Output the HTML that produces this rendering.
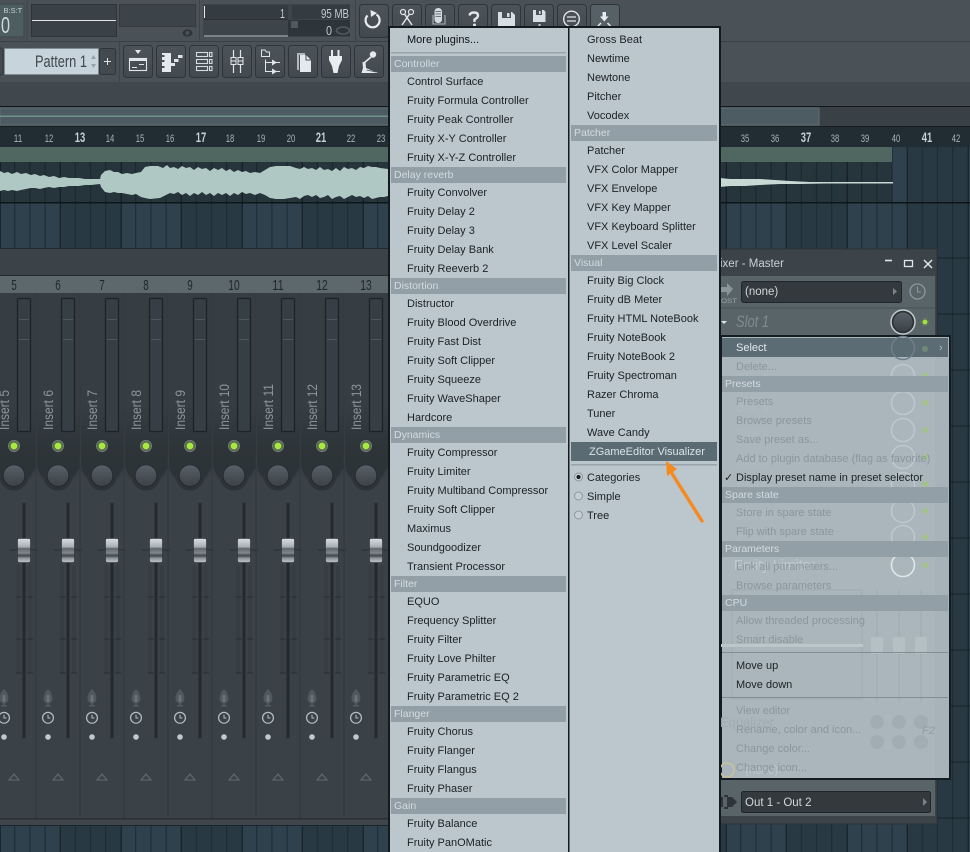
<!DOCTYPE html>
<html><head><meta charset="utf-8"><style>
html,body{margin:0;padding:0;background:#2d3e48}
#p{position:relative;width:970px;height:852px;overflow:hidden;font-family:"Liberation Sans",sans-serif}
svg{position:absolute;left:0;top:0}
.m,.h,.c,.d{position:absolute;white-space:nowrap;font-size:11px;line-height:19px;height:19px}
.m,.c,.d{margin-top:2px}
.m{color:#1b2226}
.h{color:#d3dbe0;background:#929fa6;height:16px;line-height:17px;font-size:10.5px;padding-left:3px;box-sizing:border-box}
.c{left:736px;color:#1b2226}
.d{left:736px;color:#8a969c}
.l{left:407px}.r{left:587px}
.hl{left:391px;width:175px}.hr{left:571px;width:146px}.hc{left:722px;width:226px}
</style></head><body><div id="p">
<svg width="970" height="852" viewBox="0 0 970 852" font-family="'Liberation Sans',sans-serif">
<defs>
<pattern id="g" x="-0.3" y="0" width="121" height="56" patternUnits="userSpaceOnUse">
<rect width="121" height="56" fill="#2f414c"/><rect x="60.5" width="60.5" height="56" fill="#293943"/>
<path d="M15 0V56M30.2 0V56M45.4 0V56M75.6 0V56M90.8 0V56M106 0V56" stroke="#1c2932"/>
<path d="M.5 0V56M60.5 0V56" stroke="#121b21"/></pattern>
<pattern id="g2" x="-0.3" y="0" width="121" height="56" patternUnits="userSpaceOnUse">
<rect width="121" height="56" fill="#26343c"/>
<path d="M15 0V56M30.2 0V56M45.4 0V56M75.6 0V56M90.8 0V56M106 0V56" stroke="#1a252b"/>
<path d="M.5 0V56M60.5 0V56" stroke="#10181d"/></pattern>
<linearGradient id="kn" x1="0" y1="0" x2="0" y2="1"><stop offset="0" stop-color="#596168"/><stop offset="1" stop-color="#3a4147"/></linearGradient>
<linearGradient id="dk" x1="0" y1="0" x2="0" y2="1"><stop offset="0" stop-color="#363e44"/><stop offset=".55" stop-color="#2e3539"/><stop offset="1" stop-color="#2c3337"/></linearGradient>
<linearGradient id="fd" x1="0" y1="0" x2="0" y2="1"><stop offset="0" stop-color="#d8dde0"/><stop offset=".35" stop-color="#a9b0b5"/><stop offset=".42" stop-color="#60686e"/><stop offset=".6" stop-color="#80888d"/><stop offset=".72" stop-color="#3f464c"/><stop offset=".82" stop-color="#8b9399"/><stop offset="1" stop-color="#c1c7cb"/></linearGradient>
<linearGradient id="btn" x1="0" y1="0" x2="0" y2="1"><stop offset="0" stop-color="#4c545a"/><stop offset="1" stop-color="#42494f"/></linearGradient>
<g id="st">
<path d="M-22 293V818" stroke="#30373c"/>
<path d="M-21 293H22V467Q22 478 14 480H-14Q-21 478 -21 467Z" fill="#363e44"/>
<path d="M-21 405H22V467Q18 474 14 478L-14 478Q-19 474 -21 467Z" fill="url(#dk)"/>
<rect x="3.5" y="298.500" width="13" height="133" rx="1" fill="#373f46" stroke="#1d2327" stroke-width="1.300"/>
<path d="M5 319.500H15M5 339.500H15" stroke="#4d565c"/>
<circle cx="0" cy="446" r="5.600" fill="#5b6a55" stroke="#77867a" stroke-width=".7"/><circle cx="0" cy="446" r="3.400" fill="#a6e83e"/>
<circle cx="0" cy="476" r="14.600" fill="#2d3438"/><circle cx="0" cy="476" r="11.400" fill="#24292d"/><circle cx="0" cy="475.600" r="10.400" fill="url(#kn)"/>
<path d="M4 565V673M16 565V673" stroke="#363e43" stroke-width="4" fill="none"/>
<path d="M2 597H8M13 597H19M2 639H8M13 639H19M2 673H8M13 673H19" stroke="#272d32" fill="none"/>
<rect x="8.500" y="503" width="3" height="235" fill="#23292d" stroke="#2f363b" stroke-width=".8"/>
<path d="M-4 550H24" stroke="#2a3034"/>
<rect x="3.500" y="538.500" width="13" height="24" rx="2" fill="url(#fd)" stroke="#2a3034" stroke-width=".6"/>
<path d="M-14.500 699Q-14.500 693 -10 689Q-5.500 693 -5.500 699Q-5.500 702 -9 703.500V705H-7V706.500H-13V705H-11V703.500Q-14.500 702 -14.500 699Z" fill="#4f595f"/>
<rect x="-11.500" y="695" width="3" height="7" rx="1" fill="#687278"/>
<circle cx="-10" cy="717.800" r="5.400" fill="none" stroke="#b7c1c6" stroke-width="1.200"/><path d="M-10 714.800V718H-7.600" fill="none" stroke="#b7c1c6" stroke-width="1"/>
<circle cx="-10" cy="737" r="2.800" fill="#c0cbd0"/>
<path d="M-5 780L0 774L5 780Z" fill="none" stroke="#626c71" stroke-width="1.100"/>
</g>
</defs>
<rect width="970" height="852" fill="#2d3e48"/>
<rect y="202" width="970" height="650" fill="url(#g)"/>
<rect y="146" width="970" height="60" fill="url(#g)"/>
<path d="M0 258H970M0 314H970M0 370H970M0 426H970M0 482H970M0 538H970M0 594H970M0 650H970M0 706H970M0 762H970M0 818H970" stroke="#18232a"/>
<!-- toolbar -->
<rect width="970" height="82" fill="#4a5258"/>
<rect y="41" width="970" height="1" fill="#3a4147"/>
<rect x="-1" y="4" width="25" height="33" fill="#4d5d60" stroke="#3c464a"/>
<text x="3.500" y="13" font-size="7.500" fill="#c6d0d2">B:S:T</text>
<text x="1" y="33" font-size="23" fill="#cfd8da" textLength="9" lengthAdjust="spacingAndGlyphs">0</text>
<path d="M27 0V41" stroke="#3d454a"/>
<rect x="31.500" y="4.500" width="85" height="32" fill="#3a4248" stroke="#2e353a"/><path d="M32 20.500H116" stroke="#dfe5e8"/>
<rect x="119.500" y="4.500" width="76" height="22" fill="#3c444a" stroke="#33393e"/>
<ellipse cx="187.500" cy="33" rx="5" ry="3.600" fill="#2e3539"/><circle cx="187.500" cy="33" r="2" fill="#4a5258"/>
<path d="M199.500 0V41" stroke="#3d454a"/>
<rect x="203" y="4" width="147" height="33" fill="#3d454b"/>
<rect x="204" y="5" width="84" height="14" fill="#343b41"/><rect x="292" y="5" width="58" height="14" fill="#343b41"/><rect x="288" y="20" width="62" height="16" fill="#2e353a"/>
<path d="M204.500 6V18" stroke="#dfe5e8"/><path d="M204 36H288" stroke="#b5bec3"/><path d="M204 19.500H288" stroke="#2b3136"/>
<text x="280" y="18" font-size="13" fill="#c2ccd0" textLength="5" lengthAdjust="spacingAndGlyphs">1</text>
<text x="321" y="18" font-size="13" fill="#c2ccd0" textLength="28" lengthAdjust="spacingAndGlyphs">95 MB</text>
<text x="326" y="35" font-size="13" fill="#c2ccd0" textLength="6" lengthAdjust="spacingAndGlyphs">0</text>
<rect x="291" y="21" width="7" height="7" fill="#4f585e"/><ellipse cx="343" cy="30.500" rx="6.500" ry="3.500" fill="none" stroke="#515a60" stroke-width="1.600"/>
<path d="M355.500 0V41" stroke="#3d454a"/>
<g fill="url(#btn)" stroke="#2f363b">
<rect x="359.500" y="4.500" width="29" height="33" rx="3"/><rect x="392.500" y="4.500" width="29" height="33" rx="3"/><rect x="425.500" y="4.500" width="29" height="33" rx="3"/><rect x="458.500" y="4.500" width="29" height="33" rx="3"/><rect x="491.500" y="4.500" width="29" height="33" rx="3"/><rect x="524.500" y="4.500" width="29" height="33" rx="3"/><rect x="557.500" y="4.500" width="29" height="33" rx="3"/><rect x="590.500" y="4.500" width="29" height="33" rx="3" fill="#566067"/>
<rect x="123.500" y="45.500" width="29" height="32" rx="3"/><rect x="156.500" y="45.500" width="29" height="32" rx="3"/><rect x="189.500" y="45.500" width="29" height="32" rx="3"/><rect x="222.500" y="45.500" width="29" height="32" rx="3"/><rect x="255.500" y="45.500" width="29" height="32" rx="3"/><rect x="288.500" y="45.500" width="29" height="32" rx="3"/><rect x="321.500" y="45.500" width="29" height="32" rx="3"/><rect x="354.500" y="45.500" width="29" height="32" rx="3"/>
</g>
<!-- row1 icons -->
<path d="M367.500 15.500A7 7 0 1 0 376.500 14.500" fill="none" stroke="#e6ecef" stroke-width="2.200"/><path d="M369.500 10L370 17L376 13Z" fill="#e6ecef" transform="translate(1,0)"/>
<circle cx="403" cy="12" r="2.500" fill="none" stroke="#dfe5e8" stroke-width="1.200"/><circle cx="411" cy="12" r="2.500" fill="none" stroke="#dfe5e8" stroke-width="1.200"/>
<path d="M404.500 14L412 25M409.500 14L402 25" stroke="#dfe5e8" stroke-width="1.500"/>
<rect x="434.500" y="8" width="7.500" height="15" rx="3.500" fill="#d4dbdf"/><path d="M435.500 11.500H441M435.500 14H441M435.500 16.500H441" stroke="#6d767c"/>
<path d="M433 15V24H445V15" fill="none" stroke="#aab3b8" stroke-width="1.100"/>
<path d="M469.500 15.500Q470 12.500 474 12.500Q478 12.500 478 15.500Q478 17.500 474.500 19.500V22" fill="none" stroke="#dfe5e8" stroke-width="2.400"/><circle cx="474.500" cy="25" r="1.500" fill="#dfe5e8"/>
<path d="M498 12H512L515 15V27H498Z" fill="#d8dfe3"/><rect x="502" y="12" width="9" height="6" fill="#4a5258"/><rect x="507" y="13" width="2.500" height="4" fill="#d8dfe3"/>
<path d="M533 10H544L545.500 12V22H533Z" fill="#d8dfe3"/><rect x="536" y="10" width="6" height="5" fill="#4a5258"/><rect x="539" y="11" width="1.600" height="3" fill="#d8dfe3"/><rect x="538.500" y="24" width="2" height="2.500" fill="#c5ccd0"/>
<circle cx="571.500" cy="19" r="7.800" fill="none" stroke="#dfe5e8" stroke-width="1.400"/><path d="M567 17H576M567 21H576" stroke="#dfe5e8" stroke-width="1.200"/>
<path d="M602.500 12H606V16.500H608.500L604.300 21.500L600 16.500H602.500Z" fill="#e6ecef"/><path d="M601 23L598 26M607.500 23L610.500 26" stroke="#e6ecef" stroke-width="1.500"/>
<!-- row2 -->
<path d="M135 50H141L138 54Z" fill="#e2e8eb"/><rect x="129.500" y="58.500" width="17" height="12" fill="none" stroke="#dfe5e8" stroke-width="1.100"/><rect x="129" y="58" width="18" height="3" fill="#dfe5e8"/><path d="M132 67.500H137M139 64.500H144" stroke="#dfe5e8" stroke-width="1.100"/>
<path d="M162 53H171V72H162V68H164.500V66H162V62H164.500V60H162V57H164.500V55H162Z" fill="#e3e9ec"/><rect x="178" y="55" width="4.500" height="3" fill="#dfe5e8"/><rect x="174" y="59" width="4.500" height="3" fill="#dfe5e8"/><rect x="171" y="63" width="4" height="3" fill="#dfe5e8"/>
<g fill="none" stroke="#d5dce0" stroke-width="1.100"><rect x="196.500" y="52.500" width="11" height="4"/><rect x="196.500" y="59.500" width="11" height="4"/><rect x="196.500" y="66.500" width="11" height="4"/><rect x="209.500" y="52.500" width="2.500" height="4"/><rect x="209.500" y="59.500" width="2.500" height="4"/><rect x="209.500" y="66.500" width="2.500" height="4"/></g>
<path d="M233.500 50V73M240.500 50V73" stroke="#dfe5e8" stroke-width="1.200"/><rect x="231" y="57.500" width="5" height="7" fill="#4a5258" stroke="#dfe5e8"/><rect x="238" y="57.500" width="5" height="7" fill="#4a5258" stroke="#dfe5e8"/><path d="M231 61H236M238 61H243" stroke="#dfe5e8"/>
<path d="M261.500 50H265L266.500 52H269.500V56.500H261.500Z" fill="none" stroke="#dfe5e8"/><path d="M265.500 59.500V71.500H280M265.500 62.500H280" stroke="#dfe5e8" fill="none"/><path d="M272 59.500V65.500L277 62.500ZM272 68.500V74.500L277 71.500Z" fill="#dfe5e8"/>
<path d="M297 53H305V55H299V70H297Z" fill="#aeb7bc"/><path d="M300 55H306L311 60V72H300Z" fill="#e3e9ec"/><path d="M306 55V60H311" fill="none" stroke="#4a5258"/>
<path d="M332 50V56M338.500 50V56" stroke="#e6ecef" stroke-width="2"/><path d="M329 56H342V60L339 66L337.500 73H333.500L332 66L329 60Z" fill="#e8eef0"/>
<circle cx="373" cy="54.500" r="3.200" fill="#e3e9ec"/><path d="M371 57L364 63" stroke="#e3e9ec" stroke-width="1.600"/><path d="M362.500 62H365.500L366 68L378 73H361.500L363 68Z" fill="#e3e9ec"/><path d="M366.500 70L376 72" stroke="#4a5258" stroke-width=".8"/>
<path d="M119.500 41V82" stroke="#3d454a"/>
<!-- pattern selector -->
<rect x="-8" y="48" width="11" height="27" rx="2" fill="#42494f" stroke="#2f363b"/>
<rect x="4.500" y="48.500" width="94" height="26" rx="1" fill="#c8d4db" stroke="#7f8c92"/>
<text x="35" y="67" font-size="17" fill="#3d474d" textLength="52" lengthAdjust="spacingAndGlyphs">Pattern 1</text>
<path d="M93.500 55L91 59H96ZM93.500 68L91 64H96Z" fill="#96a1a7"/>
<rect x="99.500" y="48.500" width="16" height="26" rx="2" fill="#42494f" stroke="#2f363b"/><path d="M104 61.500H111M107.500 58V65" stroke="#dfe5e8"/>
<!-- playlist bands -->
<rect y="82" width="970" height="24" fill="#40484e"/>
<rect y="106" width="970" height="1" fill="#14191c"/>
<rect y="107" width="970" height="19" fill="#394147"/>
<rect y="108" width="819" height="17" fill="#4d5c63" stroke="#5e6d74"/>
<rect y="115.500" width="388" height="1.500" fill="#6f918b"/>
<rect y="126" width="970" height="1" fill="#191f23"/>
<rect y="127" width="970" height="20" fill="#212c33"/>
<g fill="#a8b3b8" font-size="11" text-anchor="middle">
<text x="18" y="142" textLength="8.500" lengthAdjust="spacingAndGlyphs">11</text><text x="49" y="142" textLength="8.500" lengthAdjust="spacingAndGlyphs">12</text><text x="110" y="142" textLength="8.500" lengthAdjust="spacingAndGlyphs">14</text><text x="140" y="142" textLength="8.500" lengthAdjust="spacingAndGlyphs">15</text><text x="170" y="142" textLength="8.500" lengthAdjust="spacingAndGlyphs">16</text><text x="230" y="142" textLength="8.500" lengthAdjust="spacingAndGlyphs">18</text><text x="261" y="142" textLength="8.500" lengthAdjust="spacingAndGlyphs">19</text><text x="291" y="142" textLength="8.500" lengthAdjust="spacingAndGlyphs">20</text><text x="351" y="142" textLength="8.500" lengthAdjust="spacingAndGlyphs">22</text><text x="381" y="142" textLength="8.500" lengthAdjust="spacingAndGlyphs">23</text>
<text x="745" y="142" textLength="8.500" lengthAdjust="spacingAndGlyphs">35</text><text x="775" y="142" textLength="8.500" lengthAdjust="spacingAndGlyphs">36</text><text x="835" y="142" textLength="8.500" lengthAdjust="spacingAndGlyphs">38</text><text x="865" y="142" textLength="8.500" lengthAdjust="spacingAndGlyphs">39</text><text x="896" y="142" textLength="8.500" lengthAdjust="spacingAndGlyphs">40</text><text x="956" y="142" textLength="8.500" lengthAdjust="spacingAndGlyphs">42</text></g>
<g fill="#c5d0d4" font-size="13.500" font-weight="bold" text-anchor="middle">
<text x="80" y="142" textLength="10.500" lengthAdjust="spacingAndGlyphs">13</text><text x="201" y="142" textLength="10.500" lengthAdjust="spacingAndGlyphs">17</text><text x="321" y="142" textLength="10.500" lengthAdjust="spacingAndGlyphs">21</text><text x="806" y="142" textLength="10.500" lengthAdjust="spacingAndGlyphs">37</text><text x="927" y="142" textLength="10.500" lengthAdjust="spacingAndGlyphs">41</text></g>
<rect y="147" width="892" height="15" fill="#4f6661"/>
<rect y="162" width="892" height="40" fill="url(#g2)"/>
<rect y="202" width="970" height="1.500" fill="#0e1519"/>
<path d="M0 171L4 173L8 172L12 174L17 172L21 174L26 173L31 175L35 174L40 176L44 175L49 177L54 176L59 178L64 177L69 178L74 178L79 178L85 179L91 179L100 179L101 175L105 171L110 170L114 172L118 172L122 174L127 173L132 174L136 173L141 172L145 167L150 166L158 166L163 168L167 165L170 168L174 167L178 169L182 166L186 168L190 167L194 170L198 167L202 169L206 168L210 171L214 168L218 170L222 168L226 171L230 169L234 172L238 170L242 172L246 171L250 173L255 172L260 173L265 170L270 167L276 166L284 166L290 166L296 168L300 169L304 167L308 169L312 168L316 170L320 167L324 170L328 169L332 171L336 168L340 171L344 167L348 169L352 168L356 170L360 167L364 168L368 166L372 167L376 167L380 168L388 169L388 196L384 197L380 197L376 198L372 199L368 196L364 198L360 196L356 197L352 195L348 197L344 199L340 196L336 197L332 199L328 195L324 197L320 198L316 195L312 197L308 195L304 196L300 199L296 197L290 198L284 199L276 199L270 198L265 195L260 193L255 195L250 193L246 194L242 192L238 195L234 193L230 196L226 193L222 195L218 193L214 196L210 193L206 195L202 192L198 195L194 193L190 196L186 193L182 195L178 192L174 194L170 193L166 195L160 198L150 199L145 198L141 197L136 194L132 195L127 194L122 193L118 193L114 192L110 193L105 192L101 187L100 184L91 185L85 185L79 186L74 186L69 186L64 187L59 187L54 188L49 187L44 188L40 189L35 188L31 188L26 189L21 190L17 191L12 190L8 191L4 190L0 191Z" fill="#b0c8c4"/>
<path d="M720 178L730 179L745 179L760 179L775 180L790 181L810 182L825 182L893 182L893 183.500L825 183.500L800 184L780 184L760 185L745 186L730 186L720 187Z" fill="#c8d8d4"/>
<!-- mixer left -->
<rect x="0" y="248" width="388" height="577" fill="#3a4247"/>
<rect y="248" width="388" height="1" fill="#242b30"/>
<rect y="249" width="388" height="27" fill="#3b4349"/>
<rect y="275" width="388" height="1" fill="#252b2f"/>
<rect y="276" width="388" height="17" fill="#5d686c"/>
<rect y="818" width="388" height="1.500" fill="#2a3034"/><rect y="819.500" width="388" height="5.500" fill="#3e464c"/>
<rect y="825" width="388" height="1" fill="#1b2429"/>
<use href="#st" x="14"/><use href="#st" x="58"/><use href="#st" x="102"/><use href="#st" x="146"/><use href="#st" x="190"/><use href="#st" x="234"/><use href="#st" x="278"/><use href="#st" x="322"/><use href="#st" x="366"/>
<g fill="#20282c" font-size="15" text-anchor="middle">
<text x="14" y="290" textLength="5.500" lengthAdjust="spacingAndGlyphs">5</text><text x="58" y="290" textLength="5.500" lengthAdjust="spacingAndGlyphs">6</text><text x="102" y="290" textLength="5.500" lengthAdjust="spacingAndGlyphs">7</text><text x="146" y="290" textLength="5.500" lengthAdjust="spacingAndGlyphs">8</text><text x="190" y="290" textLength="5.500" lengthAdjust="spacingAndGlyphs">9</text><text x="234" y="290" textLength="11.500" lengthAdjust="spacingAndGlyphs">10</text><text x="278" y="290" textLength="11.500" lengthAdjust="spacingAndGlyphs">11</text><text x="322" y="290" textLength="11.500" lengthAdjust="spacingAndGlyphs">12</text><text x="366" y="290" textLength="11.500" lengthAdjust="spacingAndGlyphs">13</text></g>
<g fill="#8a969b" font-size="14">
<text transform="translate(9,430) rotate(-90)" textLength="40" lengthAdjust="spacingAndGlyphs">Insert 5</text><text transform="translate(53,430) rotate(-90)" textLength="40" lengthAdjust="spacingAndGlyphs">Insert 6</text><text transform="translate(97,430) rotate(-90)" textLength="40" lengthAdjust="spacingAndGlyphs">Insert 7</text><text transform="translate(141,430) rotate(-90)" textLength="40" lengthAdjust="spacingAndGlyphs">Insert 8</text><text transform="translate(185,430) rotate(-90)" textLength="40" lengthAdjust="spacingAndGlyphs">Insert 9</text><text transform="translate(229,430) rotate(-90)" textLength="46" lengthAdjust="spacingAndGlyphs">Insert 10</text><text transform="translate(273,430) rotate(-90)" textLength="46" lengthAdjust="spacingAndGlyphs">Insert 11</text><text transform="translate(317,430) rotate(-90)" textLength="46" lengthAdjust="spacingAndGlyphs">Insert 12</text><text transform="translate(361,430) rotate(-90)" textLength="46" lengthAdjust="spacingAndGlyphs">Insert 13</text></g>
<!-- mixer master -->
<rect x="720" y="249" width="217" height="575" fill="#3c444a" stroke="#2c3338"/>
<text x="720" y="267" font-size="11.500" fill="#c8d1d5">ixer - Master</text>
<path d="M885 260.500H892" stroke="#dfe5e8" stroke-width="1.600"/><rect x="904.500" y="260.500" width="8" height="6" fill="none" stroke="#dfe5e8" stroke-width="1.300"/><path d="M924 260L932 268M932 260L924 268" stroke="#dfe5e8" stroke-width="1.500"/>
<rect x="721" y="276" width="214" height="59" fill="#596469"/>
<path d="M721 287H727V283L733 289L727 296V292H721Z" fill="#8a959a"/>
<text x="721" y="303" font-size="6.500" fill="#9aa5aa" textLength="16" lengthAdjust="spacingAndGlyphs">OST</text>
<rect x="741.500" y="281.500" width="160" height="21" rx="2" fill="#33393d" stroke="#20262a"/>
<text x="745" y="295" font-size="11.500" fill="#d0d8dc">(none)</text><path d="M893 288L897 291.500L893 295Z" fill="#78848a"/>
<circle cx="917.500" cy="291.500" r="7.500" fill="none" stroke="#8d999e" stroke-width="1.300"/><path d="M917.500 286.500V292H921" fill="none" stroke="#8d999e"/>
<path d="M721 308H935" stroke="#485257"/>
<path d="M721 321H727L724 324Z" fill="#dfe5e8"/>
<text x="736" y="327" font-size="17" font-style="italic" fill="#7f8b90" textLength="33" lengthAdjust="spacingAndGlyphs">Slot 1</text>
<circle cx="903" cy="322" r="12" fill="#2d3337" stroke="#c0cbcf" stroke-width="1.500"/><circle cx="903" cy="322" r="9.500" fill="url(#kn)"/>
<circle cx="925" cy="322" r="4" fill="#51604f" stroke="#7c8a7e" stroke-width=".5"/><circle cx="925" cy="322" r="2.600" fill="#9fdf45"/>
<!-- lower master -->
<rect x="721" y="780" width="214" height="36" fill="#596469"/>
<rect x="741.500" y="791.500" width="189" height="21" rx="2" fill="#33393d" stroke="#20262a"/>
<text x="745" y="806" font-size="11.500" fill="#d0d8dc">Out 1 - Out 2</text><path d="M923 798L927 802L923 806Z" fill="#78848a"/>
<path d="M724 796H728M724 808H728M722 797V807" fill="none" stroke="#2e3438" stroke-width="2"/><path d="M727 797H732L737 802L732 807H727Z" fill="#2e3438"/>
<!-- context menu -->
<rect x="721" y="336" width="229" height="443" fill="#aab6bc" stroke="#161d22" stroke-width="2"/>
<rect x="935" y="337" width="14" height="441" fill="#a7b3b9"/>
<rect x="722" y="338" width="226" height="19" fill="#5c6c75"/>
<g fill="none" stroke="#bcc8cd" stroke-width="1.600">
<circle cx="903" cy="376" r="11.500"/><circle cx="903" cy="403" r="11.500"/><circle cx="903" cy="430" r="11.500"/><circle cx="903" cy="457" r="11.500"/><circle cx="903" cy="484" r="11.500"/><circle cx="903" cy="511" r="11.500"/><circle cx="903" cy="537" r="11.500"/></g>
<circle cx="903" cy="565" r="11.500" fill="none" stroke="#dfe6e9" stroke-width="1.600"/>
<circle cx="903" cy="348" r="11.500" fill="none" stroke="#6f7f87" stroke-width="1.500"/>
<g fill="#a3c28a"><circle cx="925" cy="375.500" r="3"/><circle cx="925" cy="403" r="3"/><circle cx="925" cy="430" r="3"/><circle cx="925" cy="457" r="3"/><circle cx="925" cy="484" r="3"/><circle cx="925" cy="511" r="3"/><circle cx="925" cy="537" r="3"/><circle cx="925" cy="565" r="3"/></g>
<circle cx="925" cy="349" r="3" fill="#6f8a72"/>
<g fill="#b9c4c9" font-size="17" font-style="italic" opacity=".3">
<text x="736" y="386" textLength="33" lengthAdjust="spacingAndGlyphs">Slot 3</text><text x="736" y="412" textLength="33" lengthAdjust="spacingAndGlyphs">Slot 4</text><text x="736" y="440" textLength="33" lengthAdjust="spacingAndGlyphs">Slot 5</text><text x="736" y="467" textLength="33" lengthAdjust="spacingAndGlyphs">Slot 6</text><text x="736" y="494" textLength="33" lengthAdjust="spacingAndGlyphs">Slot 7</text><text x="736" y="520" textLength="33" lengthAdjust="spacingAndGlyphs">Slot 8</text><text x="736" y="547" textLength="33" lengthAdjust="spacingAndGlyphs">Slot 9</text></g>
<text x="734" y="570" font-size="15" fill="#c5d0d4" opacity=".8" textLength="81" lengthAdjust="spacingAndGlyphs">Fruity Limiter</text>
<g fill="none" stroke="#9eabb1">
<path d="M877 590V702M899 590V702M921 590V702"/><rect x="732" y="590" width="130" height="109"/></g>
<rect x="721" y="644" width="142" height="3" fill="#bcc7cc"/>
<g fill="#b5c0c5"><rect x="871" y="637" width="12" height="17" rx="2"/><rect x="893" y="637" width="12" height="17" rx="2"/><rect x="915" y="637" width="12" height="17" rx="2"/></g>
<text x="720" y="727" font-size="14" fill="#a0acb2" textLength="54" lengthAdjust="spacingAndGlyphs">Equalizer</text>
<g fill="#a1adb3"><circle cx="877" cy="722" r="7"/><circle cx="899" cy="722" r="7"/><circle cx="921" cy="722" r="7"/><circle cx="877" cy="742" r="7"/><circle cx="899" cy="742" r="7"/><circle cx="921" cy="742" r="7"/></g>
<text x="922" y="734" font-size="11" font-style="italic" fill="#8f9ba1">F2</text>
<circle cx="727" cy="770" r="7" fill="none" stroke="#c8c29a" stroke-width="1.600"/>
<text x="745" y="774" font-size="11.500" fill="#bcc7cc">(none)</text>
<path d="M722 652.500H948M722 697.500H948" stroke="#818e95"/>
<!-- main menu -->
<rect x="389" y="27" width="331" height="830" fill="#bcc6cd" stroke="#141b20" stroke-width="2"/>
<rect x="568" y="27" width="1.500" height="830" fill="#141b20"/>
<rect x="391" y="52" width="175" height="1.500" fill="#98a4ab"/>
<rect x="571" y="442" width="146" height="19" fill="#5b6b74"/>
<rect x="571" y="464" width="146" height="1.500" fill="#98a4ab"/>
<g fill="#c4ced4" stroke="#8d999f"><circle cx="578.500" cy="477" r="4"/><circle cx="578.500" cy="496" r="4"/><circle cx="578.500" cy="515" r="4"/></g><circle cx="578.500" cy="477" r="2" fill="#161c20"/>
</svg>

<div class="m l" style="top:29px;color:#0e1418">More plugins...</div>
<div class="h hl" style="top:56px">Controller</div>
<div class="m l" style="top:71px">Control Surface</div>
<div class="m l" style="top:90px">Fruity Formula Controller</div>
<div class="m l" style="top:109px">Fruity Peak Controller</div>
<div class="m l" style="top:128px">Fruity X-Y Controller</div>
<div class="m l" style="top:147px">Fruity X-Y-Z Controller</div>
<div class="h hl" style="top:167px">Delay reverb</div>
<div class="m l" style="top:182px">Fruity Convolver</div>
<div class="m l" style="top:201px">Fruity Delay 2</div>
<div class="m l" style="top:220px">Fruity Delay 3</div>
<div class="m l" style="top:239px">Fruity Delay Bank</div>
<div class="m l" style="top:258px">Fruity Reeverb 2</div>
<div class="h hl" style="top:278px">Distortion</div>
<div class="m l" style="top:293px">Distructor</div>
<div class="m l" style="top:312px">Fruity Blood Overdrive</div>
<div class="m l" style="top:331px">Fruity Fast Dist</div>
<div class="m l" style="top:350px">Fruity Soft Clipper</div>
<div class="m l" style="top:369px">Fruity Squeeze</div>
<div class="m l" style="top:388px">Fruity WaveShaper</div>
<div class="m l" style="top:407px">Hardcore</div>
<div class="h hl" style="top:427px">Dynamics</div>
<div class="m l" style="top:442px">Fruity Compressor</div>
<div class="m l" style="top:461px">Fruity Limiter</div>
<div class="m l" style="top:480px">Fruity Multiband Compressor</div>
<div class="m l" style="top:499px">Fruity Soft Clipper</div>
<div class="m l" style="top:518px">Maximus</div>
<div class="m l" style="top:537px">Soundgoodizer</div>
<div class="m l" style="top:556px">Transient Processor</div>
<div class="h hl" style="top:576px">Filter</div>
<div class="m l" style="top:591px">EQUO</div>
<div class="m l" style="top:610px">Frequency Splitter</div>
<div class="m l" style="top:629px">Fruity Filter</div>
<div class="m l" style="top:648px">Fruity Love Philter</div>
<div class="m l" style="top:667px">Fruity Parametric EQ</div>
<div class="m l" style="top:686px">Fruity Parametric EQ 2</div>
<div class="h hl" style="top:706px">Flanger</div>
<div class="m l" style="top:721px">Fruity Chorus</div>
<div class="m l" style="top:740px">Fruity Flanger</div>
<div class="m l" style="top:759px">Fruity Flangus</div>
<div class="m l" style="top:778px">Fruity Phaser</div>
<div class="h hl" style="top:798px">Gain</div>
<div class="m l" style="top:813px">Fruity Balance</div>
<div class="m l" style="top:832px">Fruity PanOMatic</div>

<div class="m r" style="top:29px">Gross Beat</div>
<div class="m r" style="top:48px">Newtime</div>
<div class="m r" style="top:67px">Newtone</div>
<div class="m r" style="top:86px">Pitcher</div>
<div class="m r" style="top:105px">Vocodex</div>
<div class="h hr" style="top:125px">Patcher</div>
<div class="m r" style="top:140px">Patcher</div>
<div class="m r" style="top:159px">VFX Color Mapper</div>
<div class="m r" style="top:178px">VFX Envelope</div>
<div class="m r" style="top:197px">VFX Key Mapper</div>
<div class="m r" style="top:216px">VFX Keyboard Splitter</div>
<div class="m r" style="top:235px">VFX Level Scaler</div>
<div class="h hr" style="top:255px">Visual</div>
<div class="m r" style="top:270px">Fruity Big Clock</div>
<div class="m r" style="top:289px">Fruity dB Meter</div>
<div class="m r" style="top:308px">Fruity HTML NoteBook</div>
<div class="m r" style="top:327px">Fruity NoteBook</div>
<div class="m r" style="top:346px">Fruity NoteBook 2</div>
<div class="m r" style="top:365px">Fruity Spectroman</div>
<div class="m r" style="top:384px">Razer Chroma</div>
<div class="m r" style="top:403px">Tuner</div>
<div class="m r" style="top:422px">Wave Candy</div>
<div class="m" style="left:589px;top:441px;color:#dbe3e7">ZGameEditor Visualizer</div>
<div class="m r" style="top:467px">Categories</div>
<div class="m r" style="top:486px">Simple</div>
<div class="m r" style="top:505px">Tree</div>

<div class="c" style="top:337px;color:#e3e9ec">Select</div>
<div class="m" style="left:939px;top:337px;color:#aeb9bf">›</div>
<div class="d" style="top:356px">Delete...</div>
<div class="h hc" style="top:376px">Presets</div>
<div class="d" style="top:391px">Presets</div>
<div class="d" style="top:410px">Browse presets</div>
<div class="d" style="top:429px">Save preset as...</div>
<div class="d" style="top:448px">Add to plugin database (flag as favorite)</div>
<div class="c" style="top:467px">Display preset name in preset selector</div>
<div class="m" style="left:724px;top:467px">✓</div>
<div class="h hc" style="top:487px">Spare state</div>
<div class="d" style="top:502px">Store in spare state</div>
<div class="d" style="top:521px">Flip with spare state</div>
<div class="h hc" style="top:541px">Parameters</div>
<div class="d" style="top:556px">Link all parameters...</div>
<div class="d" style="top:575px">Browse parameters</div>
<div class="h hc" style="top:595px">CPU</div>
<div class="d" style="top:610px">Allow threaded processing</div>
<div class="d" style="top:629px">Smart disable</div>
<div class="c" style="top:655px">Move up</div>
<div class="c" style="top:674px">Move down</div>
<div class="d" style="top:700px">View editor</div>
<div class="d" style="top:719px">Rename, color and icon...</div>
<div class="d" style="top:738px">Change color...</div>
<div class="d" style="top:757px">Change icon...</div>

<svg width="970" height="852" viewBox="0 0 970 852" style="pointer-events:none">
<path d="M702 521L671 472" stroke="#f58a1f" stroke-width="3.400" stroke-linecap="round"/>
<path d="M666 461L677 469L667 476Z" fill="#f58a1f"/>
</svg>
</div></body></html>
